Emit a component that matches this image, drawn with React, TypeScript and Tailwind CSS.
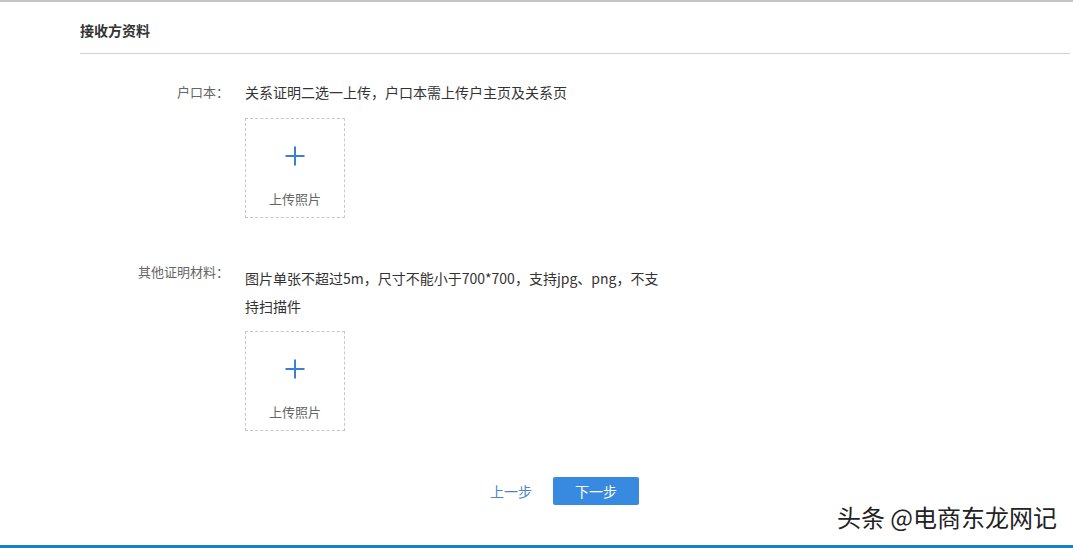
import { Plus } from 'lucide-react';

const font = { fontFamily: '"Microsoft YaHei", "Noto Sans CJK SC", "Liberation Sans", sans-serif' };

function UploadBox() {
  return (
    <div className="w-[100px] h-[100px] border border-dashed border-[#c8c8c8] flex flex-col items-center">
      <Plus className="w-[30px] h-[30px] mt-[22px] text-[#3a7fd0]" strokeWidth={1.6} />
      <span className="mt-[18px] text-[13px] text-[#666]">上传照片</span>
    </div>
  );
}

interface FieldRowProps {
  label: string;
  children: React.ReactNode;
}

function FieldRow({ label, children }: FieldRowProps) {
  return (
    <div className="flex">
      <div className="w-[245px] shrink-0 pr-[16px] text-right text-[13px] leading-[28px] text-[#666]">{label}</div>
      <div className="flex flex-col">{children}</div>
    </div>
  );
}

export default function App() {
  return (
    <div className="w-[1073px] h-[548px] bg-white flex flex-col border-t-2 border-[#c4c4c4]" style={font}>
      <div className="flex-1 pl-[80px] pr-[3px]">
        {/* Header */}
        <div className="h-[52px] flex items-center border-b border-[#d2d2d2]">
          <h3 className="text-[14px] font-bold text-[#333] pt-[5px]">接收方资料</h3>
        </div>

        <div className="-ml-[80px] pt-[24px] flex flex-col">
          <FieldRow label="户口本：">
            <p className="text-[14px] leading-[28px] text-[#333]">关系证明二选一上传，户口本需上传户主页及关系页</p>
            <div className="mt-[12px]">
              <UploadBox />
            </div>
          </FieldRow>

          <div className="mt-[40px]">
            <FieldRow label="其他证明材料：">
              <p className="w-[422px] text-[14px] leading-[28px] text-[#333] pt-[6px]">
                图片单张不超过5m，尺寸不能小于700*700，支持jpg、png，不支持扫描件
              </p>
              <div className="mt-[11px]">
                <UploadBox />
              </div>
            </FieldRow>
          </div>

          {/* Buttons */}
          <div className="mt-[46px] flex items-center pl-[490px] gap-[21px]">
            <button className="text-[14px] text-[#4a86c5]">上一步</button>
            <button className="w-[86px] h-[28px] rounded-[2px] bg-[#378ae0] text-white text-[14px]">下一步</button>
          </div>
        </div>
      </div>
      <div className="relative h-[3px] bg-[#1a7fc4]">
        <span
          className="absolute right-[16px] bottom-[16px] text-[24px] leading-[30px] text-[#222] whitespace-nowrap"
          style={{ textShadow: '1px 1px 0 #fff, -1px -1px 0 #fff, 1px -1px 0 #fff, -1px 1px 0 #fff' }}
        >
          头条 @电商东龙网记
        </span>
      </div>
    </div>
  );
}
